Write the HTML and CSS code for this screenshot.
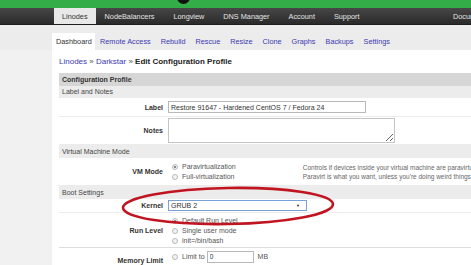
FILE: index.html
```html
<!DOCTYPE html>
<html lang="en">
<head>
    <meta charset="UTF-8">
    <meta name="viewport" content="width=device-width, initial-scale=1.0">
    <title>Edit Configuration Profile</title>
    <link rel="stylesheet" href="styles.css">
</head>
<body>

    <!-- Top brand strip -->
    <div class="brand-bar">
        <span class="logo-dot"></span>
    </div>

    <!-- Main navigation -->
    <div class="main-nav">
        <a class="nav-tab active">Linodes</a>
        <a class="nav-tab">NodeBalancers</a>
        <a class="nav-tab">Longview</a>
        <a class="nav-tab">DNS Manager</a>
        <a class="nav-tab">Account</a>
        <a class="nav-tab">Support</a>
        <a class="nav-tab right">Documentation</a>
    </div>

    <!-- Sub navigation -->
    <div class="sub-nav">
        <a class="sub-tab active">Dashboard</a>
        <a class="sub-tab">Remote Access</a>
        <a class="sub-tab">Rebuild</a>
        <a class="sub-tab">Rescue</a>
        <a class="sub-tab">Resize</a>
        <a class="sub-tab">Clone</a>
        <a class="sub-tab">Graphs</a>
        <a class="sub-tab">Backups</a>
        <a class="sub-tab">Settings</a>
    </div>

    <div class="page">
        <div class="side"></div>

        <div class="content">
            <div class="breadcrumb">
                <a>Linodes</a> <span class="sep">&raquo;</span> <a>Darkstar</a> <span class="sep">&raquo;</span> <b>Edit Configuration Profile</b>
            </div>

            <div class="form">
                <div class="form-head">Configuration Profile</div>

                <div class="section first">Label and Notes</div>
                <div class="row row-label">
                    <div class="key">Label</div>
                    <div class="val"><input class="text-in label-in" type="text" value="Restore 91647 - Hardened CentOS 7 / Fedora 24"></div>
                </div>
                <div class="row row-notes">
                    <div class="key">Notes</div>
                    <div class="val"><textarea class="notes-in"></textarea></div>
                </div>

                <div class="section">Virtual Machine Mode</div>
                <div class="row row-vm">
                    <div class="key">VM Mode</div>
                    <div class="val options">
                        <div class="opt"><span class="radio on"></span>Paravirtualization</div>
                        <div class="opt"><span class="radio"></span>Full-virtualization</div>
                    </div>
                    <div class="help">
                        Controls if devices inside your virtual machine are paravirtualized or fully virtualized.<br>
                        Paravirt is what you want, unless you're doing weird things.
                    </div>
                </div>

                <div class="section">Boot Settings</div>
                <div class="row row-kernel">
                    <div class="key">Kernel</div>
                    <div class="val">
                        <div class="select">GRUB 2<span class="caret">&#9660;</span></div>
                    </div>
                </div>
                <div class="row row-run">
                    <div class="key">Run Level</div>
                    <div class="val options">
                        <div class="opt"><span class="radio on"></span>Default Run Level</div>
                        <div class="opt"><span class="radio"></span>Single user mode</div>
                        <div class="opt"><span class="radio"></span>init=/bin/bash</div>
                    </div>
                </div>
                <div class="row row-mem">
                    <div class="key">Memory Limit</div>
                    <div class="val options">
                        <div class="opt"><span class="radio"></span>Limit to <input class="text-in mem-in" type="text" value="0"> MB</div>
                        <div class="opt"><span class="radio on"></span>Maximum (1024 MB)</div>
                    </div>
                </div>
            </div>
        </div>
    </div>

    <!-- Red annotation circled round the kernel row -->
    <svg class="annotation" width="471" height="265" viewBox="0 0 471 265">
        <ellipse cx="228" cy="206" rx="105" ry="18" transform="rotate(-1 228 206)" fill="none" stroke="#c01420" stroke-width="2.6"/>
    </svg>

</body>
</html>
```

FILE: styles.css
```css
* {
    margin: 0;
    padding: 0;
    box-sizing: border-box;
}

body {
    font-family: "Liberation Sans", Arial, sans-serif;
    font-size: 7px;
    color: #333;
    background-color: #f1f1f1;
    overflow: hidden;
    width: 471px;
    height: 265px;
    position: relative;
}

a {
    cursor: pointer;
}

/* Green brand strip with the bottom of the logo peeking in */
.brand-bar {
    height: 8px;
    background-color: #33ad48;
    position: relative;
    overflow: hidden;
}

.logo-dot {
    position: absolute;
    left: 177px;
    top: -9px;
    width: 13px;
    height: 13px;
    border-radius: 50%;
    background-color: #111;
}

/* Dark main navigation */
.main-nav {
    height: 17px;
    display: flex;
    align-items: stretch;
    padding-left: 54px;
    background: linear-gradient(#474747, #2a2a2a);
    border-bottom: 1px solid #1d1d1d;
    white-space: nowrap;
}

.nav-tab {
    display: flex;
    align-items: center;
    padding: 0 9px;
    margin-right: 1px;
    font-size: 7.3px;
    color: #e4e4e4;
}

.nav-tab.active {
    background-color: #e8e8e8;
    color: #333;
    padding: 0 8px;
    margin-right: 0;
}

.nav-tab.right {
    margin-left: auto;
    margin-right: -40px;
}

/* Light sub navigation */
.sub-nav {
    height: 25px;
    display: flex;
    align-items: flex-end;
    padding-left: 52px;
    background-color: #ececec;
    white-space: nowrap;
}

.sub-tab {
    height: 17px;
    display: flex;
    align-items: center;
    padding: 0 5px;
    font-size: 7.3px;
    color: #3a3ab4;
}

.sub-tab.active {
    background-color: #fff;
    color: #333;
    padding: 0 4px;
    width: 43px;
}

/* Page body */
.page {
    display: flex;
}

.side {
    width: 52px;
    flex-shrink: 0;
}

.content {
    flex: 1;
    background-color: #fff;
    padding: 6px 0 0 7px;
    min-height: 215px;
}

.breadcrumb {
    height: 17px;
    font-size: 8px;
    line-height: 12px;
    white-space: nowrap;
}

.breadcrumb a {
    color: #3a3ab4;
}

.breadcrumb .sep {
    color: #555;
}

.breadcrumb b {
    color: #222;
}

/* Form table */
.form {
    width: 560px;
}

.form-head {
    height: 13px;
    line-height: 13px;
    padding-left: 3px;
    background-color: #d6d6d6;
    font-weight: bold;
    color: #333;
}

.section {
    height: 13px;
    line-height: 13px;
    padding-left: 3px;
    background-color: #ececec;
    color: #444;
}

.section.first {
    height: 12px;
    line-height: 12px;
}

.row {
    display: flex;
    align-items: center;
    border-bottom: 1px solid #ececec;
}

.key {
    width: 109px;
    flex-shrink: 0;
    padding-right: 5px;
    text-align: right;
    font-weight: bold;
    color: #333;
}

.val {
    flex-shrink: 0;
}

.row-label {
    height: 19px;
}

.row-notes {
    height: 28px;
}

.row-vm {
    height: 28px;
}

.row-kernel {
    height: 14px;
}

.row-run {
    height: 35px;
    border-bottom: 1px solid #dcdcdc;
}

.row-mem {
    height: 30px;
    align-items: flex-start;
}

.row-mem .key {
    padding-top: 9px;
}

.text-in {
    font-family: "Liberation Sans", Arial, sans-serif;
    font-size: 7px;
    color: #333;
    height: 12px;
    border: 1px solid #b9b9b9;
    padding: 0 2px;
    background-color: #fff;
}

.label-in {
    width: 198px;
}

.notes-in {
    display: block;
    width: 227px;
    height: 25px;
    border: 1px solid #c4c4c4;
    resize: both;
}

.options {
    padding-left: 4px;
}

.opt {
    display: flex;
    align-items: center;
    height: 10px;
    color: #555;
}

.radio {
    width: 6px;
    height: 6px;
    border-radius: 50%;
    border: 1px solid #b8b8b8;
    background-color: #f4f4f4;
    margin-right: 4px;
    position: relative;
}

.radio.on::after {
    content: "";
    position: absolute;
    left: 1px;
    top: 1px;
    width: 2px;
    height: 2px;
    border-radius: 50%;
    background-color: #666;
}

.help {
    margin-left: 67px;
    font-size: 6.5px;
    line-height: 9px;
    color: #666;
    white-space: nowrap;
}

.select {
    width: 139px;
    height: 11px;
    line-height: 9px;
    border: 1px solid #7aa0d8;
    padding-left: 2px;
    color: #333;
    background-color: #fff;
    position: relative;
}

.caret {
    position: absolute;
    right: 6px;
    top: 0;
    font-size: 4px;
    color: #222;
}

.row-run .options {
    padding-top: 1px;
}

.row-mem .options {
    padding-top: 2px;
}

.row-mem .opt {
    height: 13px;
}

.mem-in {
    width: 47px;
    margin: 0 4px 0 2px;
}

/* Red annotation drawn over the page */
.annotation {
    position: absolute;
    left: 0;
    top: 0;
    pointer-events: none;
}
```
